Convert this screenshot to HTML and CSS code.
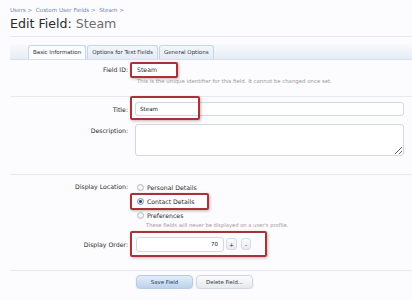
FILE: index.html
```html
<!DOCTYPE html>
<html lang="en">
<head>
    <meta charset="UTF-8">
    <title>Edit Field: Steam</title>
    <link rel="stylesheet" href="styles.css">
</head>
<body>
    <div class="breadcrumb">
        <a href="#">Users</a> &gt; &nbsp;<a href="#">Custom User Fields</a> &gt; &nbsp;<a href="#">Steam</a> &gt;
    </div>
    <h1 class="title">Edit Field: <span class="title-name">Steam</span></h1>

    <div class="tabs">
        <a href="#" class="tab active">Basic Information</a>
        <a href="#" class="tab">Options for Text Fields</a>
        <a href="#" class="tab">General Options</a>
    </div>

    <form class="form">
        <div class="row row-first">
            <div class="label">Field ID:</div>
            <div class="ctrl">
                <span class="mark field-id">Steam</span>
                <div class="hint">This is the unique identifier for this field. It cannot be changed once set.</div>
            </div>
        </div>

        <div class="group group-first">
            <div class="row">
                <div class="label">Title:</div>
                <div class="ctrl rel">
                    <input class="text" type="text" value="Steam">
                    <span class="mark mark-title"></span>
                </div>
            </div>
            <div class="row row-desc">
                <div class="label label-top">Description:</div>
                <div class="ctrl">
                    <textarea class="textarea"></textarea>
                </div>
            </div>
        </div>

        <div class="group group-display">
            <div class="row row-radio">
                <div class="label label-radio">Display Location:</div>
                <div class="ctrl">
                    <div class="radio"><span class="dot"></span>Personal Details</div>
                    <div class="radio"><span class="radio-mark"><span class="dot checked"></span>Contact Details</span></div>
                    <div class="radio"><span class="dot"></span>Preferences</div>
                    <div class="hint hint-radio">These fields will never be displayed on a user's profile.</div>
                </div>
            </div>
            <div class="row row-order">
                <div class="label">Display Order:</div>
                <div class="ctrl">
                    <div class="mark spin">
                        <input class="text num" type="text" value="70">
                        <span class="spin-btn">+</span>
                        <span class="spin-btn minus">-</span>
                    </div>
                </div>
            </div>
        </div>

        <div class="group buttons">
            <button type="button" class="button primary">Save Field</button>
            <button type="button" class="button">Delete Field...</button>
        </div>
    </form>
</body>
</html>
```

FILE: styles.css
```css
body {
    margin: 0;
    width: 412px;
    font-family: "DejaVu Sans", Verdana, sans-serif;
    background-color: #fcfcfe;
    color: #333;
}

.breadcrumb {
    padding: 6px 10px 0;
    height: 8px;
    font-size: 5.6px;
    line-height: 8px;
    color: #7d93b3;
}

.breadcrumb a {
    color: #6f88ad;
    text-decoration: none;
}

.title {
    margin: 0 0 0 10px;
    padding: 2px 0 4px;
    font-size: 12.6px;
    line-height: 16px;
    font-weight: normal;
    color: #2b2b2b;
    border-bottom: 1px solid #e4e8ee;
}

.title-name {
    color: #6e6e6e;
}

/* tab strip */
.tabs {
    margin: 7px 0 0 10px;
    height: 15px;
    padding-left: 18px;
    display: flex;
    align-items: flex-end;
    background: linear-gradient(#f8fafd, #e6edf6);
    border-bottom: 1px solid #d6e0ed;
}

.tab {
    height: 13px;
    line-height: 13px;
    padding: 0 4px;
    margin-right: 1px;
    font-size: 5.5px;
    color: #333;
    text-decoration: none;
    border: 1px solid #c9d6e7;
    border-bottom: none;
    border-radius: 3px 3px 0 0;
    background: linear-gradient(#f3f7fc, #e3ebf6);
}

.tab.active {
    background: #fbfcfe;
}

/* form rows */
.form {
    margin-left: 10px;
}

.row {
    display: flex;
    align-items: center;
}

.row-first {
    align-items: flex-start;
    padding-top: 2px;
}

.row-first .label {
    line-height: 16px;
}

.label {
    width: 118px;
    text-align: right;
    font-size: 6.2px;
    color: #2d2d2d;
    flex-shrink: 0;
}

.label-top {
    align-self: flex-start;
    padding-top: 3px;
}

.label-radio {
    align-self: flex-start;
    line-height: 14px;
}

.ctrl {
    margin-left: 7px;
    flex: 1;
    margin-right: 8px;
    font-size: 6px;
}

.rel {
    position: relative;
}

.mark {
    border: 2px solid #a8323a;
    border-radius: 2px;
    box-shadow: 1px 1px 3px rgba(120, 30, 30, 0.35);
}

.field-id {
    display: block;
    box-sizing: border-box;
    margin-left: -5px;
    width: 48px;
    height: 16px;
    padding-left: 5px;
    line-height: 12px;
    font-size: 6.2px;
    background: #fff;
}

.hint {
    margin-left: 2px;
    font-size: 5.4px;
    line-height: 6px;
    color: #9a9a9a;
}

.group {
    border-top: 1px solid #e6e9ef;
}

.group-first {
    margin-top: 12px;
    padding-top: 5px;
}

.text {
    box-sizing: border-box;
    width: 100%;
    height: 14px;
    margin: 0;
    padding: 0 4px;
    font-family: "DejaVu Sans", Verdana, sans-serif;
    font-size: 5.6px;
    color: #222;
    background: #fff;
    border: 1px solid #d3d7de;
    border-radius: 3px;
    outline: none;
    display: block;
}

.mark-title {
    position: absolute;
    left: -5px;
    top: -6px;
    width: 66px;
    height: 20px;
}

.row-desc {
    margin-top: 8px;
}

.textarea {
    display: block;
    box-sizing: border-box;
    width: 100%;
    height: 32px;
    margin: 0;
    border: 1px solid #d3d7de;
    border-radius: 3px;
    background: #fff;
}

.group-display {
    margin-top: 18px;
}

.row-radio {
    padding-top: 5px;
    align-items: flex-start;
}

.radio {
    display: flex;
    align-items: center;
    height: 14px;
    margin-left: 2px;
    font-size: 6.2px;
    color: #2d2d2d;
}

.radio-mark {
    display: inline-flex;
    align-items: center;
    height: 13px;
    padding: 0 12px 0 5px;
    margin-left: -7px;
    border: 2px solid #a8323a;
    border-radius: 2px;
    box-shadow: 1px 1px 3px rgba(120, 30, 30, 0.35);
}

.dot {
    display: inline-block;
    box-sizing: border-box;
    width: 7px;
    height: 7px;
    margin-right: 3px;
    border-radius: 50%;
    border: 1px solid #b5bac2;
    background: radial-gradient(#fff, #e4e7ec);
}

.dot.checked {
    background: radial-gradient(#2c4d7a 35%, #dfe5ee 45%);
    border-color: #8a97a8;
}

.hint-radio {
    margin-left: 11px;
    font-size: 5.2px;
}

.row-order {
    margin-top: 3px;
}

.spin {
    display: flex;
    align-items: center;
    box-sizing: border-box;
    width: 137px;
    height: 26px;
    margin-left: -5px;
    padding: 0 0 0 4px;
}

.num {
    width: 88px;
    height: 15px;
    text-align: right;
    padding-right: 5px;
}

.spin-btn {
    box-sizing: border-box;
    width: 11px;
    height: 12px;
    margin-left: 2px;
    text-align: center;
    font-size: 6px;
    line-height: 11px;
    color: #333;
    border: 1px solid #d6dbe2;
    border-radius: 3px;
    background: linear-gradient(#fafbfd, #e6e9ee);
}

.spin-btn.minus {
    width: 10px;
    margin-left: 4px;
}

.buttons {
    margin-top: 13px;
    padding: 4px 0 0 126px;
    display: flex;
    gap: 3px;
}

.button {
    width: 57px;
    height: 14px;
    padding: 0;
    font-family: "DejaVu Sans", Verdana, sans-serif;
    font-size: 5.4px;
    color: #333;
    border: 1px solid #cfd6e0;
    border-radius: 4px;
    background: linear-gradient(#fbfcfd, #e5e8ed);
    box-shadow: 0 1px 2px rgba(0, 0, 0, 0.12);
}

.button.primary {
    color: #233a5c;
    border-color: #b8cbe2;
    background: linear-gradient(#e4eef9, #bcd2ea);
}
```
